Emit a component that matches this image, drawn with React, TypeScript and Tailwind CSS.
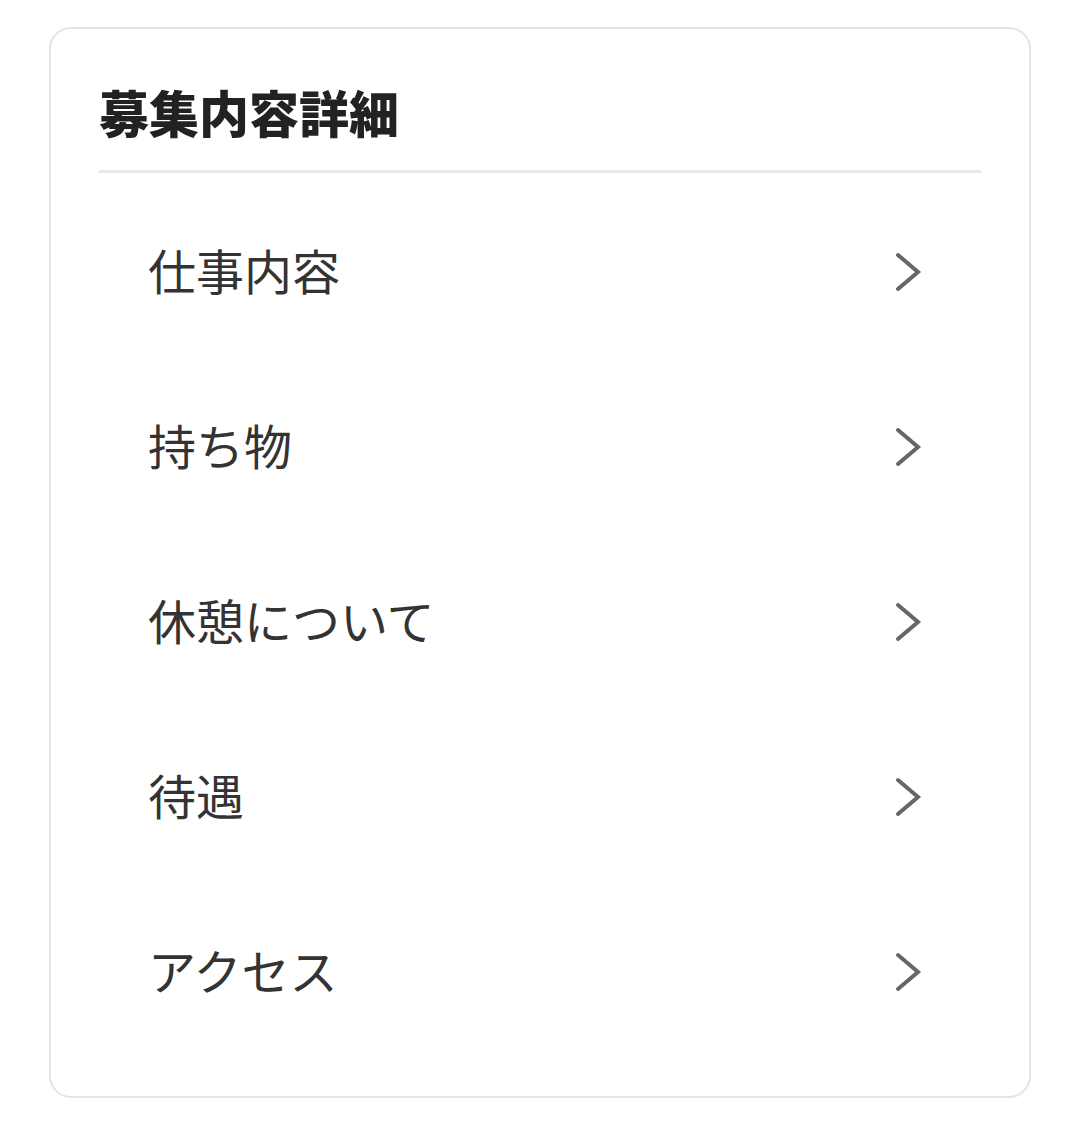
const items = ["仕事内容", "持ち物", "休憩について", "待遇", "アクセス"];

const Chevron = () => (
  <svg width="27" height="40" viewBox="0 0 27 40" fill="none" className="shrink-0">
    <polyline
      points="3,3 23,20 3,37"
      stroke="#666666"
      strokeWidth="4"
      strokeLinecap="round"
      strokeLinejoin="miter"
    />
  </svg>
);

const App = () => {
  return (
    <div
      className="min-h-[1135px] w-[1080px] bg-white pt-[27px] pl-[49px]"
      style={{ fontFamily: '"Noto Sans CJK JP", "Noto Sans", sans-serif' }}
    >
      <section className="w-[982px] h-[1071px] rounded-[22px] border-2 border-[#e4e4e4] px-[48px]">
        <h2 className="pt-[57px] pb-[34px] text-[50px] leading-[50px] font-black text-[#222222]">
          募集内容詳細
        </h2>
        <div className="h-[3px] bg-[#e8e8e8]" />
        <ul className="mt-[11px]">
          {items.map((item) => (
            <li
              key={item}
              className="flex h-[175px] items-center justify-between pl-[49px] pr-[59px] cursor-pointer"
            >
              <span className="pb-[6px] text-[48px] leading-none text-[#333333]">{item}</span>
              <Chevron />
            </li>
          ))}
        </ul>
      </section>
    </div>
  );
};

export default App;
